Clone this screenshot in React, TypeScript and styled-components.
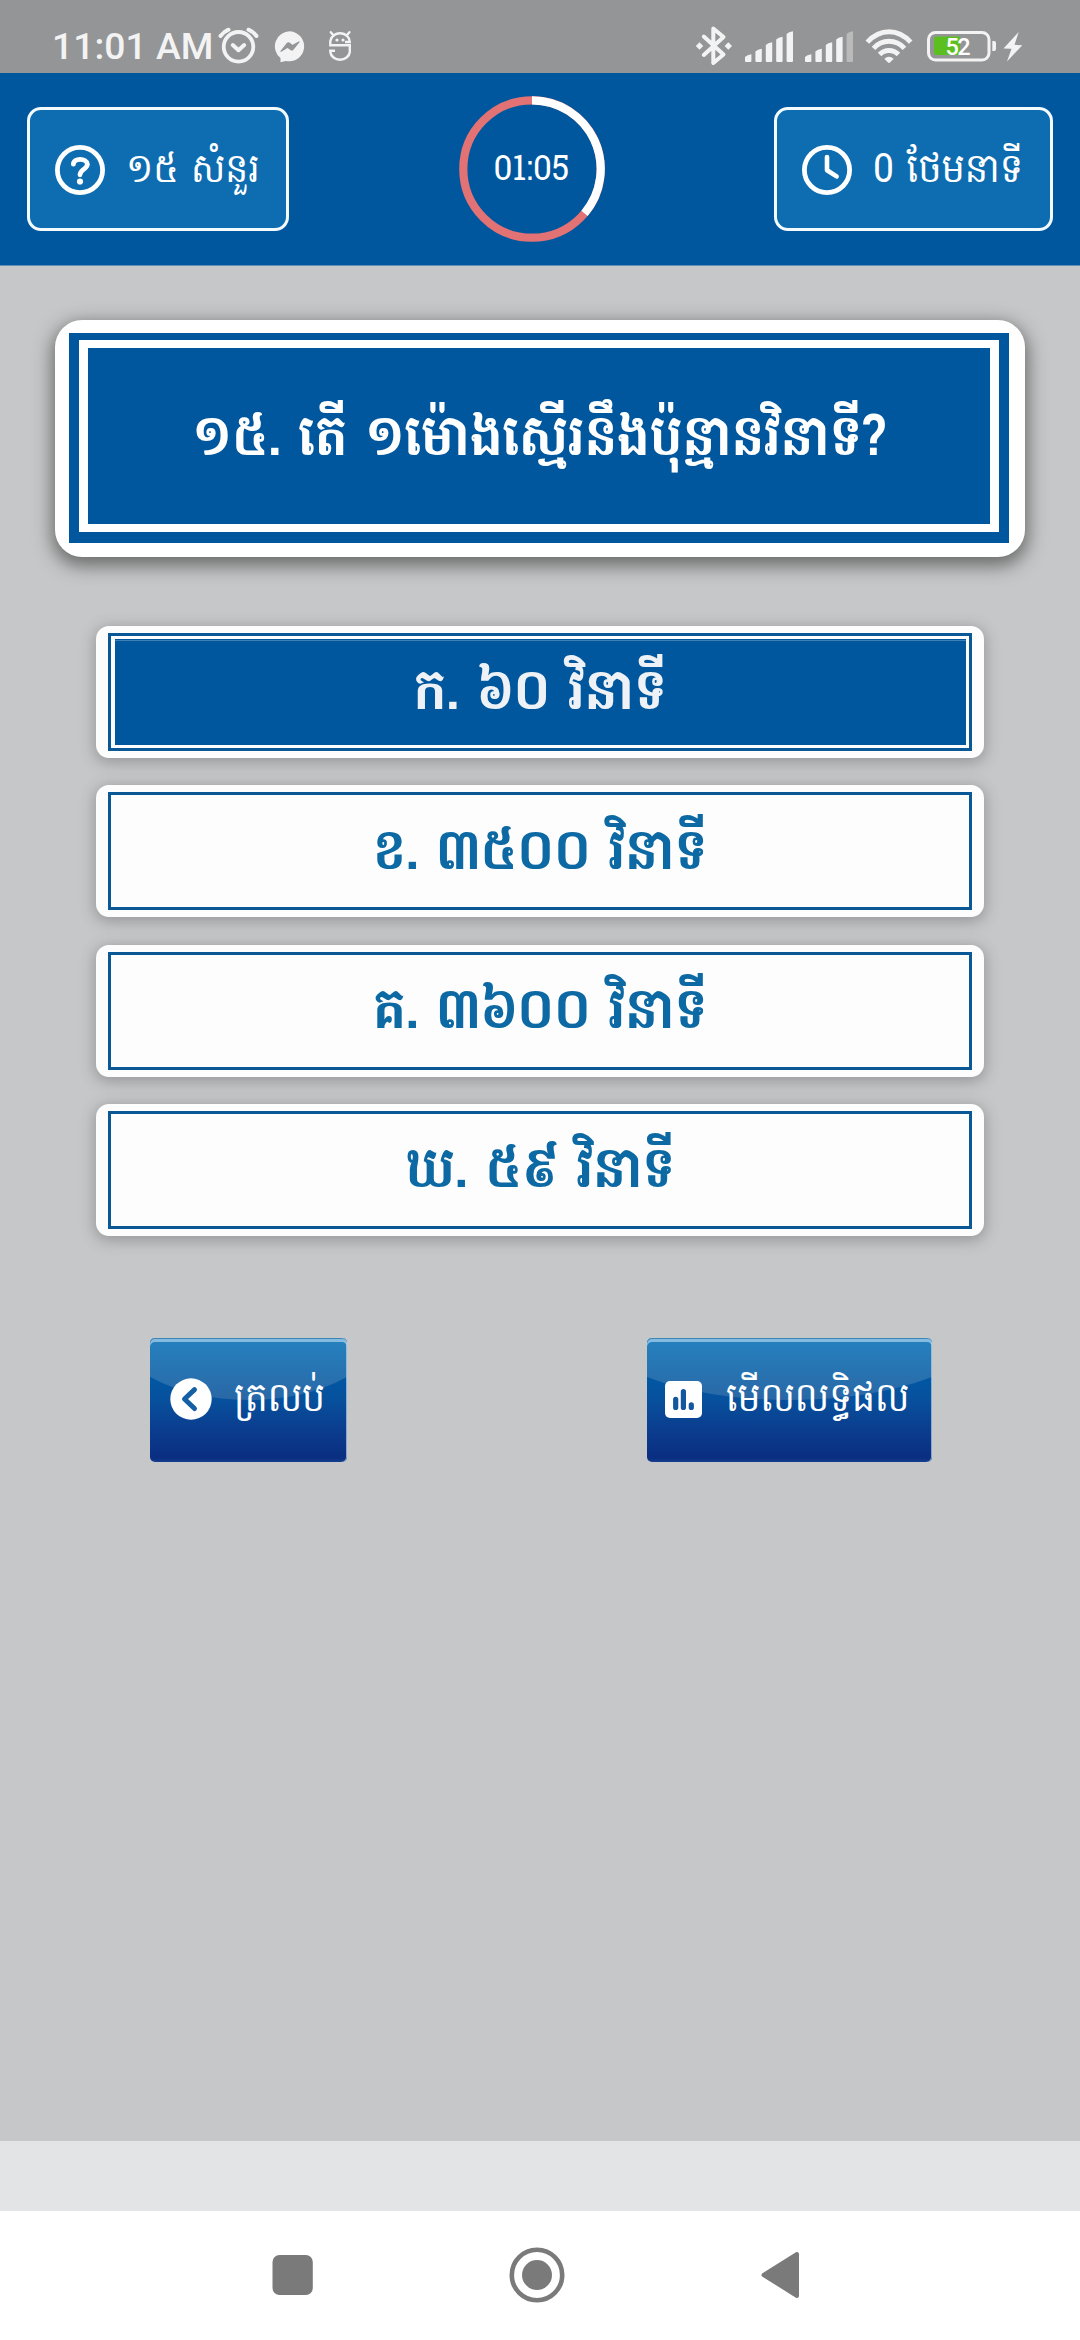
import React from "react";
import styled, { createGlobalStyle, css } from "styled-components";

const BLUE = "#00579d";
const STATUS = "#f3f3f3";

const GlobalStyle = createGlobalStyle`
  * { box-sizing: border-box; }
  body { margin: 0; background: #c6c7c9; font-family: Hanuman, Roboto, "Noto Sans", sans-serif; }
`;

const Screen = styled.div`
  width: 1080px;
  height: 2340px;
  display: flex;
  flex-direction: column;
  background: #c6c7c9;
  overflow: hidden;
`;

const StatusBar = styled.div`
  height: 73px;
  flex: none;
  display: flex;
  justify-content: space-between;
  padding: 20px 57px 0 52px;
  background: #949597;
`;

const StatusGroup = styled.div`
  display: flex;
  align-items: flex-start;
`;

const StatusItem = styled.div<{ $top: number; $left?: number }>`
  padding: ${(p) => p.$top}px 0 0 ${(p) => p.$left ?? 0}px;
`;

const Clock = styled.span`
  width: 165px;
  font: 500 37.3px/53px Roboto, sans-serif;
  color: ${STATUS};
  white-space: nowrap;
`;

const Header = styled.header`
  height: 193px;
  flex: none;
  display: flex;
  justify-content: space-between;
  align-items: flex-start;
  padding: 23px 27px 0;
  background: ${BLUE};
  border-bottom: 1px solid #5f93bd;
`;

const Chip = styled.div<{ $w: number }>`
  width: ${(p) => p.$w}px;
  height: 124px;
  margin-top: 11px;
  padding: 2px 0 0 25px;
  display: flex;
  align-items: center;
  gap: 21px;
  border: 3px solid #f4fbff;
  border-radius: 14px;
  background: #0e6cb0;
`;

const KhmerText = styled.span<{ $size: number; $origin?: string; $bold?: boolean; $drop?: number; $scale?: number }>`
  display: block;
  font-size: ${(p) => p.$size}px;
  font-weight: ${(p) => (p.$bold ? 700 : 400)};
  line-height: 1.47;
  padding-top: ${(p) => p.$drop ?? 0}px;
  white-space: nowrap;
  transform: scaleX(${(p) => p.$scale ?? 0.903});
  transform-origin: ${(p) => p.$origin ?? "center"} center;
`;

const ChipLabel = styled(KhmerText)`
  color: #fff;
`;

const Timer = styled.div`
  display: grid;
  width: 146px;
  height: 146px;
  place-items: center;
  color: #fff;
  > * { grid-area: 1 / 1; }
`;

const Main = styled.main`
  flex: 1;
  display: flex;
  flex-direction: column;
  padding: 54px 55px 0;
`;

const QuestionCard = styled.section`
  height: 237px;
  padding: 13px 16px 14px 14px;
  border-radius: 27px;
  background: #fff;
  box-shadow: 0 6px 18px 3px rgba(50, 52, 48, 0.62);
`;

const QuestionPlate = styled.div`
  height: 100%;
  padding: 7px 10px 11px;
  background: ${BLUE};
`;

const QuestionFrame = styled.div`
  height: 100%;
  display: flex;
  align-items: center;
  justify-content: center;
  border: 8px solid #fff;
  border-width: 8px 9px;
  color: #fff;
`;

const Options = styled.div`
  display: flex;
  flex-direction: column;
  gap: 27.4px;
  padding: 69px 41px 0;
`;

const OptionCard = styled.button`
  display: block;
  width: 100%;
  height: 132px;
  padding: 7px 12px;
  border: 0;
  border-radius: 13px;
  background: #fdfdfd;
  box-shadow: 0 3px 14px 2px rgba(80, 82, 84, 0.38);
  font-family: inherit;
`;

const OptionFrame = styled.span`
  display: block;
  height: 118px;
  border: 3px solid #0a5896;
  padding: 3px 3px 3px 4px;
`;

const OptionFill = styled.span<{ $on?: boolean }>`
  display: flex;
  height: 100%;
  align-items: center;
  justify-content: center;
  color: #0c69a3;
  ${(p) =>
    p.$on &&
    css`
      background: ${BLUE};
      color: #eef2f6;
      box-shadow: inset 0 1px ${BLUE}, inset 0 2px #3f7fb4;
    `}
`;

const Actions = styled.div`
  display: flex;
  justify-content: space-between;
  padding: 102px 93px 0 95px;
`;

const GlossButton = styled.button<{ $w: number; $gap: number; $pad: number }>`
  position: relative;
  width: ${(p) => p.$w}px;
  height: 124px;
  padding: 0 0 2px ${(p) => p.$pad}px;
  display: flex;
  align-items: center;
  gap: ${(p) => p.$gap}px;
  border: 0;
  border-radius: 5px;
  overflow: hidden;
  color: #fff;
  font-family: inherit;
  background: linear-gradient(#0058a4 30%, #07509d 50%, #0b3c8e 75%, #0a2e81 97%, #173f8e 100%);
  &::before {
    content: "";
    position: absolute;
    left: -20%;
    right: -20%;
    top: -92px;
    height: 154px;
    border-radius: 50%;
    background: linear-gradient(#2580bd 62%, #2a67a6 100%);
  }
  &::after {
    content: "";
    position: absolute;
    inset: 0;
    border-radius: 5px;
    box-shadow: inset -1px 0 rgba(190, 215, 240, 0.7), inset 0 1px #3b86b7, inset 0 4px rgba(165, 207, 235, 0.75);
  }
  > * { z-index: 1; flex: none; }
`;

const FooterStrip = styled.div`
  height: 70px;
  flex: none;
  background: #e2e4e6;
`;

const NavBar = styled.nav`
  height: 129px;
  flex: none;
  display: flex;
  align-items: flex-start;
  justify-content: space-between;
  padding: 36px 279px 0 272px;
  background: #fff;
`;

const Shape = styled.svg`
  display: block;
  flex: none;
`;

const AlarmIcon = () => (
  <Shape width={41} height={40} viewBox="218 26 41 40" fill="none" stroke={STATUS}>
    <circle cx="238.5" cy="46.8" r="14.8" strokeWidth="3.8" />
    <path d="M220.5 36Q224 31.5 228.5 29.7M248.5 29.7Q253 31.5 256.5 36" strokeWidth="4" strokeLinecap="round" />
    <path d="M232.8 45L238.5 50.2L244.2 45" strokeWidth="4" strokeLinecap="round" strokeLinejoin="round" />
  </Shape>
);

const MessengerIcon = () => (
  <Shape width={32} height={34} viewBox="274 30 32 34">
    <path d="M290 31.3a15 15 0 1 1-4.2 29.6L280.5 62.3V58A15 15 0 0 1 290 31.3Z" fill={STATUS} />
    <path d="M281 51.3L287.2 43.4Q288.2 42.3 289.5 43.2L292.5 45.6L299 41.9L293 49.3Q292 50.5 290.7 49.6L287.6 47.3Z" fill="#949597" stroke="#949597" strokeWidth="1.2" strokeLinejoin="round" />
  </Shape>
);

const MascotIcon = () => (
  <Shape width={24} height={33} viewBox="328 30 24 33" fill="none" stroke={STATUS} strokeWidth="2.4">
    <path d="M345 42H349.8A9.8 9 0 0 0 330.3 41V45.3H349.8V52A9.8 8.6 0 0 1 330.3 52V50.8H335" />
    <path d="M330.8 32.2L333.6 35.5M349.4 32.2L346.6 35.5" strokeWidth="2.4" strokeLinecap="round" />
    <circle cx="337" cy="40" r="1.6" fill={STATUS} stroke="none" />
    <circle cx="343" cy="40" r="1.6" fill={STATUS} stroke="none" />
  </Shape>
);

const BluetoothIcon = () => (
  <Shape width={38} height={42} viewBox="695 25 38 42" fill="none" stroke={STATUS}>
    <path d="M703.8 36.5L723.5 54.5L713.3 63V28.5L723.5 37L703.8 55" strokeWidth="4" strokeLinecap="round" strokeLinejoin="round" />
    <path d="M695.8 46l3.7-3.7 3.7 3.7-3.7 3.7zM724.6 46l3.7-3.7 3.7 3.7-3.7 3.7z" fill={STATUS} stroke="none" />
  </Shape>
);

const SignalIcon = ({ dim }: { dim?: boolean }) => (
  <Shape width={49} height={32} viewBox="0 0 49 32" fill={STATUS}>
    {[8, 13.5, 20, 25.5, 31].map((h, i) => (
      <path
        key={h}
        opacity={dim && i === 4 ? 0.4 : 1}
        d={`M${i * 10.4} 30.5V${34 - h}Q${i * 10.4 + 2} ${32 - h} ${i * 10.4 + 6.4} ${31.3 - h}V30Q${i * 10.4 + 6.4} 31 ${i * 10.4 + 5.4} 31H${i * 10.4 + 1}Q${i * 10.4} 31 ${i * 10.4} 30Z`}
      />
    ))}
  </Shape>
);

const WifiIcon = () => (
  <Shape width={48} height={36} viewBox="865 28 48 36" fill="none" stroke={STATUS} strokeWidth="4.9">
    <path d="M867.3 42.2Q877 31.8 889 31.8T910.7 42.2" />
    <path d="M873.5 48.3Q880 41.3 889 41.3T904.5 48.3" />
    <path d="M879.6 54.5Q883.5 50.5 889 50.5T898.4 54.5" />
    <path d="M884.3 58.8Q889 54.8 893.7 58.8L890 62.6Q889 63.4 888 62.6Z" fill={STATUS} stroke="none" />
  </Shape>
);

const BatteryIcon = () => (
  <Shape width={70} height={32} viewBox="927 30 70 32">
    <rect x="928.5" y="32.5" width="60.5" height="27.5" rx="7" fill="none" stroke={STATUS} strokeWidth="3" />
    <path d="M992.3 41h1.7q2 0 2 2v6q0 2-2 2h-1.7z" fill={STATUS} />
    <path d="M936 36.5H960V55H936Q934 55 934 53V38.5Q934 36.5 936 36.5Z" fill="#5bc01f" />
    <text x="945.5" y="54.8" fontFamily="Roboto, sans-serif" fontWeight="500" fontSize="23.5" textLength="25" fill="#fff">
      52
    </text>
  </Shape>
);

const BoltIcon = () => (
  <Shape width={20} height={30} viewBox="1003 32 20 30">
    <path d="M1018.7 32L1003.5 48.5L1011.5 48.7L1007 61.5L1022.3 45.2L1014.5 44.8Z" fill={STATUS} />
  </Shape>
);

const HelpIcon = () => (
  <Shape width={50} height={50} viewBox="0 0 50 50" fill="none" stroke="#fff">
    <circle cx="25" cy="25" r="22.6" strokeWidth="4.8" />
    <path d="M18.4 19.2C18.4 12.8 31.6 12.6 32.4 19.2C32.6 24 25 24.2 25 29.8" strokeWidth="4.8" strokeLinecap="round" />
    <circle cx="25" cy="36.5" r="3.1" fill="#fff" stroke="none" />
  </Shape>
);

const ClockIcon = () => (
  <Shape width={50} height={50} viewBox="0 0 50 50" fill="none" stroke="#fff">
    <circle cx="25" cy="25" r="22.6" strokeWidth="4.8" />
    <path d="M25 12V25.3L34.6 31.4" strokeWidth="4.6" strokeLinecap="round" strokeLinejoin="round" />
  </Shape>
);

const TimerRing = () => (
  <Shape width={146} height={146} viewBox="0 0 146 146" fill="none" strokeWidth="8.2">
    <circle cx="73" cy="73" r="68.7" stroke="#e37274" />
    <path d="M73 4.3A68.7 68.7 0 0 1 125.5 117.3" stroke="#fff" />
  </Shape>
);

const BackIcon = () => (
  <Shape width={42} height={42} viewBox="0 0 42 42">
    <circle cx="21" cy="21" r="20.7" fill="#fff" />
    <path d="M24.5 11.7L14.5 21L24.5 30.5" fill="none" stroke="#155fa5" strokeWidth="5" strokeLinecap="round" strokeLinejoin="round" />
  </Shape>
);

const ChartIcon = () => (
  <Shape width={37} height={37} viewBox="0 0 37 37">
    <rect width="37" height="37" rx="5" fill="#fff" />
    <path d="M10.7 18.3V26.5M18.4 10.6V26.5M26.3 23.8V26.5" stroke="#14579f" strokeWidth="5.2" strokeLinecap="round" />
  </Shape>
);

const options = [
  { text: "ក. ៦០ វិនាទី", on: true },
  { text: "ខ. ៣៥០០ វិនាទី" },
  { text: "គ. ៣៦០០ វិនាទី" },
  { text: "ឃ. ៥៩ វិនាទី" },
];

export default function App() {
  return (
    <Screen>
      <GlobalStyle />
      <StatusBar>
        <StatusGroup>
          <Clock>11:01 AM</Clock>
          <StatusItem $top={6} $left={1}><AlarmIcon /></StatusItem>
          <StatusItem $top={10} $left={15}><MessengerIcon /></StatusItem>
          <StatusItem $top={10} $left={22}><MascotIcon /></StatusItem>
        </StatusGroup>
        <StatusGroup>
          <StatusItem $top={5}><BluetoothIcon /></StatusItem>
          <StatusItem $top={11} $left={12}><SignalIcon /></StatusItem>
          <StatusItem $top={11} $left={11}><SignalIcon dim /></StatusItem>
          <StatusItem $top={8} $left={11}><WifiIcon /></StatusItem>
          <StatusItem $top={10} $left={14}><BatteryIcon /></StatusItem>
          <StatusItem $top={12} $left={6}><BoltIcon /></StatusItem>
        </StatusGroup>
      </StatusBar>
      <Header>
        <Chip $w={262}>
          <HelpIcon />
          <ChipLabel $size={40} $drop={6} $origin="left" $scale={0.9}>១៥ សំនួរ</ChipLabel>
        </Chip>
        <Timer>
          <TimerRing />
          <KhmerText $size={34.5} $drop={7} $scale={0.96}>01:05</KhmerText>
        </Timer>
        <Chip $w={279}>
          <ClockIcon />
          <ChipLabel $size={40} $drop={6} $origin="left" $scale={0.918}>0 ថែមនាទី</ChipLabel>
        </Chip>
      </Header>
      <Main>
        <QuestionCard>
          <QuestionPlate>
            <QuestionFrame>
              <KhmerText $size={57} $bold $drop={12}>១៥. តើ ១ម៉ោងស្មើរនឹងប៉ុន្មានវិនាទី?</KhmerText>
            </QuestionFrame>
          </QuestionPlate>
        </QuestionCard>
        <Options>
          {options.map((o) => (
            <OptionCard key={o.text}>
              <OptionFrame>
                <OptionFill $on={o.on}>
                  <KhmerText $size={57.5} $bold $drop={7}>{o.text}</KhmerText>
                </OptionFill>
              </OptionFrame>
            </OptionCard>
          ))}
        </Options>
        <Actions>
          <GlossButton $w={197} $pad={20} $gap={22}>
            <BackIcon />
            <KhmerText $size={40} $drop={6} $origin="left">ត្រលប់</KhmerText>
          </GlossButton>
          <GlossButton $w={285} $pad={18} $gap={24}>
            <ChartIcon />
            <KhmerText $size={40} $drop={6} $origin="left">មើលលទ្ធិផល</KhmerText>
          </GlossButton>
        </Actions>
      </Main>
      <FooterStrip />
      <NavBar>
        <Shape width={41} height={56} viewBox="272 2247 41 56">
          <rect x="272.5" y="2255" width="40.3" height="40" rx="7" fill="#7a7a7a" />
        </Shape>
        <Shape width={56} height={56} viewBox="0 0 56 56">
          <circle cx="28" cy="28" r="25.2" fill="none" stroke="#7a7a7a" strokeWidth="4.6" />
          <circle cx="28" cy="28" r="15" fill="#7a7a7a" />
        </Shape>
        <Shape width={40} height={56} viewBox="761 2247 40 56">
          <path d="M763.5 2275L797 2254V2296Z" fill="#7a7a7a" stroke="#7a7a7a" strokeWidth="4" strokeLinejoin="round" />
        </Shape>
      </NavBar>
    </Screen>
  );
}
